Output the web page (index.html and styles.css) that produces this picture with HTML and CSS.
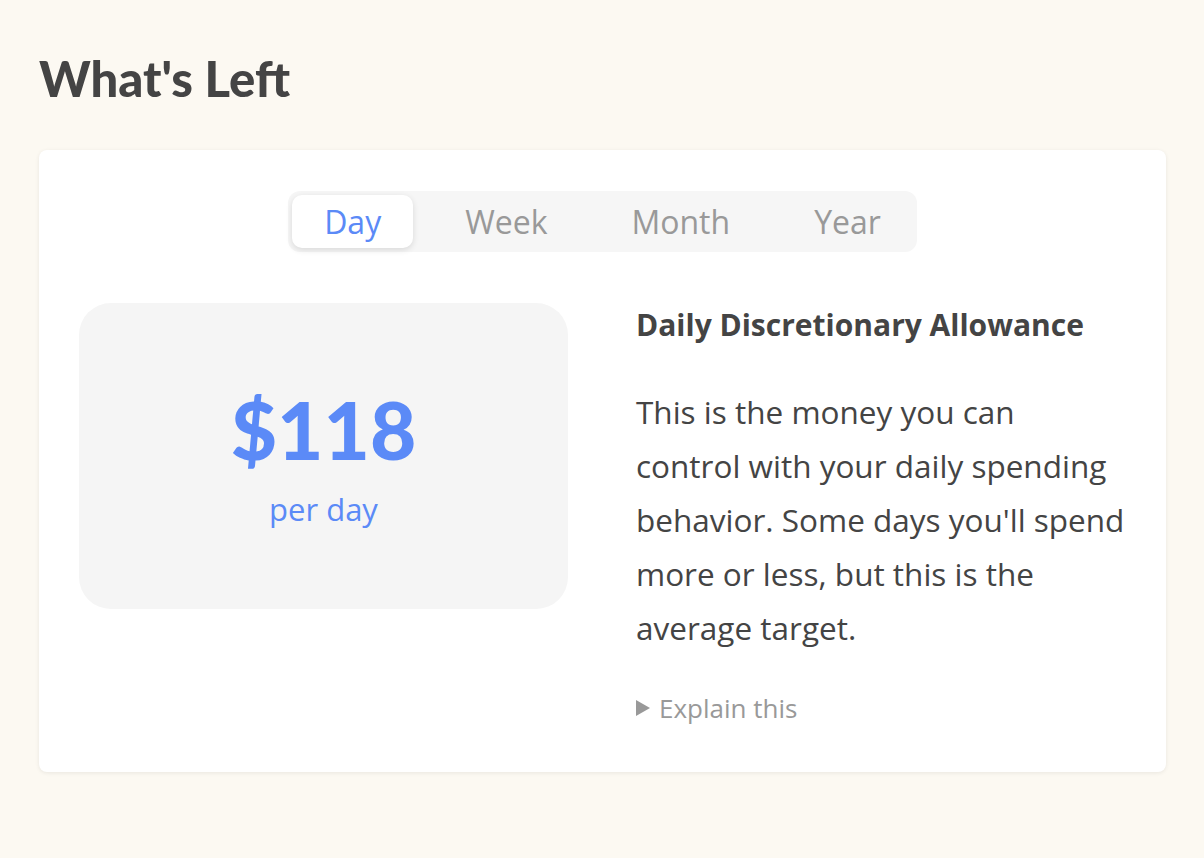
FILE: index.html
```html
<!doctype html>
<html lang="en">
    <head>
        <meta charset="utf-8">
        <meta name="viewport" content="width=device-width, initial-scale=1">
        <title>What's Left</title>
        <link rel="stylesheet" href="styles.css">
    </head>
    <body>
        <h1 class="title">What's Left</h1>
        <div class="card">
            <div class="tabs">
                <button class="tab is-active">Day</button>
                <button class="tab">Week</button>
                <button class="tab">Month</button>
                <button class="tab">Year</button>
            </div>
            <div class="columns">
                <div class="amount-box">
                    <div class="amount">$118</div>
                    <div class="per">per day</div>
                </div>
                <div class="info">
                    <h2 class="info-title">Daily Discretionary Allowance</h2>
                    <p class="info-text">This is the money you can control with your daily spending behavior. Some days you'll spend more or less, but this is the average target.</p>
                    <div class="explain"><span class="arrow"></span>Explain this</div>
                </div>
            </div>
        </div>
    </body>
</html>
```

FILE: styles.css
```css
html {
    font-family: "Open Sans", Lato, sans-serif;
}
body {
    margin: 0;
    padding: 50px 38px 40px 39px;
    background-color: #fcf9f2;
    color: #444;
}
.title {
    font-family: Lato, sans-serif;
    font-size: 49px;
    font-weight: 900;
    margin: 0 0 44px 0;
    line-height: 56px;
    color: #444;
}
.card {
    background-color: #fff;
    border-radius: 8px;
    box-shadow: 0 1px 4px rgba(0, 0, 0, 0.08);
    padding: 41px 40px 47px 40px;
}
.tabs {
    display: flex;
    gap: 20px;
    width: max-content;
    margin: 0 auto;
    padding: 4px;
    background-color: #f6f6f6;
    border-radius: 12px;
}
.tab {
    font-family: inherit;
    font-size: 32px;
    color: #999;
    background: none;
    border: none;
    border-radius: 10px;
    padding: 0 32px;
    height: 53px;
}
.tab.is-active {
    background-color: #fff;
    color: #5b8af7;
    box-shadow: 0 2px 6px rgba(0, 0, 0, 0.12);
}
.columns {
    display: grid;
    grid-template-columns: 489px 1fr;
    gap: 68px;
    margin-top: 51px;
    align-items: start;
}
.amount-box {
    background-color: #f5f5f5;
    border-radius: 32px;
    height: 306px;
    display: flex;
    flex-direction: column;
    align-items: center;
    justify-content: center;
    color: #5b8af7;
}
.amount {
    font-family: Lato, sans-serif;
    font-size: 80px;
    font-weight: 900;
    line-height: 90px;
}
.per {
    font-size: 31px;
    margin-top: 15px;
    line-height: 40px;
}
.info-title {
    font-size: 30px;
    font-weight: bold;
    margin: 2px 0 40px 0;
    line-height: 40px;
}
.info-text {
    font-size: 31.5px;
    line-height: 54px;
    margin: 0 0 36px 0;
}
.explain {
    display: flex;
    align-items: center;
    gap: 9px;
    font-size: 26px;
    line-height: 34px;
    color: #999;
}
.arrow {
    width: 0;
    height: 0;
    border-left: 14px solid #999;
    border-top: 8px solid transparent;
    border-bottom: 8px solid transparent;
}
```
